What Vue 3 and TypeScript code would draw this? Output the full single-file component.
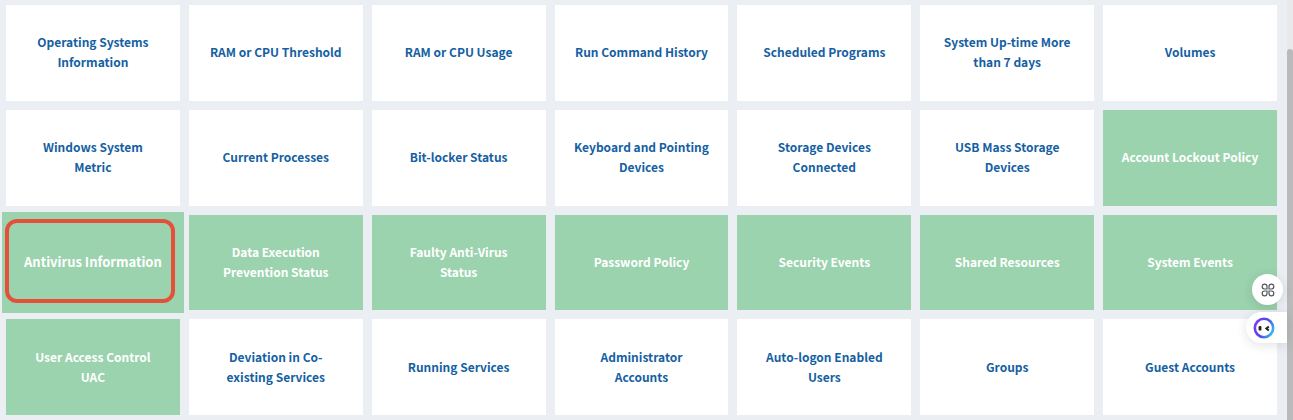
<script setup lang="ts">
import { ref } from 'vue'

interface Report {
  name: string
  done?: boolean
}

const reports: Report[] = [
  { name: 'Operating Systems\nInformation' },
  { name: 'RAM or CPU Threshold' },
  { name: 'RAM or CPU Usage' },
  { name: 'Run Command History' },
  { name: 'Scheduled Programs' },
  { name: 'System Up-time More\nthan 7 days' },
  { name: 'Volumes' },
  { name: 'Windows System\nMetric' },
  { name: 'Current Processes' },
  { name: 'Bit-locker Status' },
  { name: 'Keyboard and Pointing\nDevices' },
  { name: 'Storage Devices\nConnected' },
  { name: 'USB Mass Storage\nDevices' },
  { name: 'Account Lockout Policy', done: true },
  { name: 'Antivirus Information', done: true },
  { name: 'Data Execution\nPrevention Status', done: true },
  { name: 'Faulty Anti-Virus\nStatus', done: true },
  { name: 'Password Policy', done: true },
  { name: 'Security Events', done: true },
  { name: 'Shared Resources', done: true },
  { name: 'System Events', done: true },
  { name: 'User Access Control\nUAC', done: true },
  { name: 'Deviation in Co-\nexisting Services' },
  { name: 'Running Services' },
  { name: 'Administrator\nAccounts' },
  { name: 'Auto-logon Enabled\nUsers' },
  { name: 'Groups' },
  { name: 'Guest Accounts' },
]

const active = ref('Antivirus Information')
</script>

<template>
  <div class="page">
    <main class="grid">
      <button
        v-for="report in reports"
        :key="report.name"
        type="button"
        class="tile"
        :class="{ done: report.done, active: report.name === active }"
        @click="active = report.name"
      >
        <span class="label">{{ report.name }}</span>
        <span v-if="report.name === active" class="marker"></span>
      </button>
    </main>

    <div class="scrollbar"><div class="thumb"></div></div>

    <div class="floating">
      <button type="button" class="apps" aria-label="Apps">
        <svg width="14" height="14" viewBox="0 0 14 14" fill="none" stroke="#55565c" stroke-width="1.2">
          <path d="M6 6H3.5A2.4 2.4 0 1 1 6 3.5Z" />
          <path d="M8 6V3.5A2.4 2.4 0 1 1 10.5 6Z" />
          <path d="M6 8V10.5A2.4 2.4 0 1 1 3.5 8Z" />
          <path d="M8 8H10.5A2.4 2.4 0 1 1 8 10.5Z" />
        </svg>
      </button>
      <button type="button" class="assistant" aria-label="Assistant">
        <svg width="22" height="22" viewBox="0 0 22 22" fill="none">
          <defs>
            <linearGradient id="ring" x1="2" y1="8" x2="19" y2="16" gradientUnits="userSpaceOnUse">
              <stop offset="0" stop-color="#7a3cf5" />
              <stop offset="0.5" stop-color="#5046f0" />
              <stop offset="1" stop-color="#35b5ec" />
            </linearGradient>
          </defs>
          <circle cx="11" cy="11" r="9.2" stroke="url(#ring)" stroke-width="2.6" />
          <rect x="5.6" y="9" width="2.8" height="4.6" rx="1.2" fill="#222" />
          <path d="M15.8 9.4L13.4 11.4L15.8 13.4" stroke="#222" stroke-width="2" />
        </svg>
      </button>
    </div>
  </div>
</template>

<style>
body {
  margin: 0;
  background: #ebeff4;
}
</style>

<style scoped>
.page {
  display: flex;
  min-height: 100vh;
  background: #ebeff4;
  font-family: "Noto Sans CJK SC", "Open Sans", sans-serif;
}

.grid {
  flex: 1;
  display: grid;
  grid-template-columns: repeat(7, minmax(0, 1fr));
  align-content: start;
  gap: 9px;
  padding: 5px 10px 5px 6px;
}

.tile {
  position: relative;
  display: flex;
  align-items: center;
  justify-content: center;
  box-sizing: border-box;
  aspect-ratio: 1815 / 1000;
  padding: 0 12px 1px;
  border: 0;
  background: #fff;
  color: #155fa3;
  font-family: inherit;
  font-size: 12px;
  font-weight: 700;
  line-height: 20px;
  text-align: center;
  cursor: pointer;
}

.done {
  background: #9bd3ae;
  color: #fff;
}

.active {
  z-index: 1;
  font-size: 13px;
}

.active::before {
  content: "";
  position: absolute;
  inset: -3px -4px;
  background: inherit;
}

.label {
  position: relative;
  white-space: pre-line;
}

.marker {
  position: absolute;
  inset: 4px 5px 7px -1px;
  border: 4px solid #e5503b;
  border-radius: 12px;
}

.scrollbar {
  flex: none;
  width: 6px;
  padding-top: 49px;
  box-sizing: border-box;
  display: flex;
  background: #e9e9e9;
}

.thumb {
  flex: 1;
  border-radius: 3px 3px 0 0;
  background: #bababa;
}

.floating {
  position: fixed;
  z-index: 2;
  top: 274px;
  right: 6px;
  display: flex;
  flex-direction: column;
  align-items: flex-end;
  gap: 7px;
}

.apps,
.assistant {
  display: flex;
  align-items: center;
  height: 31px;
  padding: 0;
  border: 0;
  background: #fff;
  box-shadow: 0 2px 12px rgba(0, 0, 0, 0.12);
  cursor: pointer;
}

.apps {
  justify-content: center;
  width: 31px;
  margin-right: 4px;
  border-radius: 50%;
}

.assistant {
  width: 41px;
  padding-left: 7px;
  border-radius: 16px 0 0 16px;
}
</style>
